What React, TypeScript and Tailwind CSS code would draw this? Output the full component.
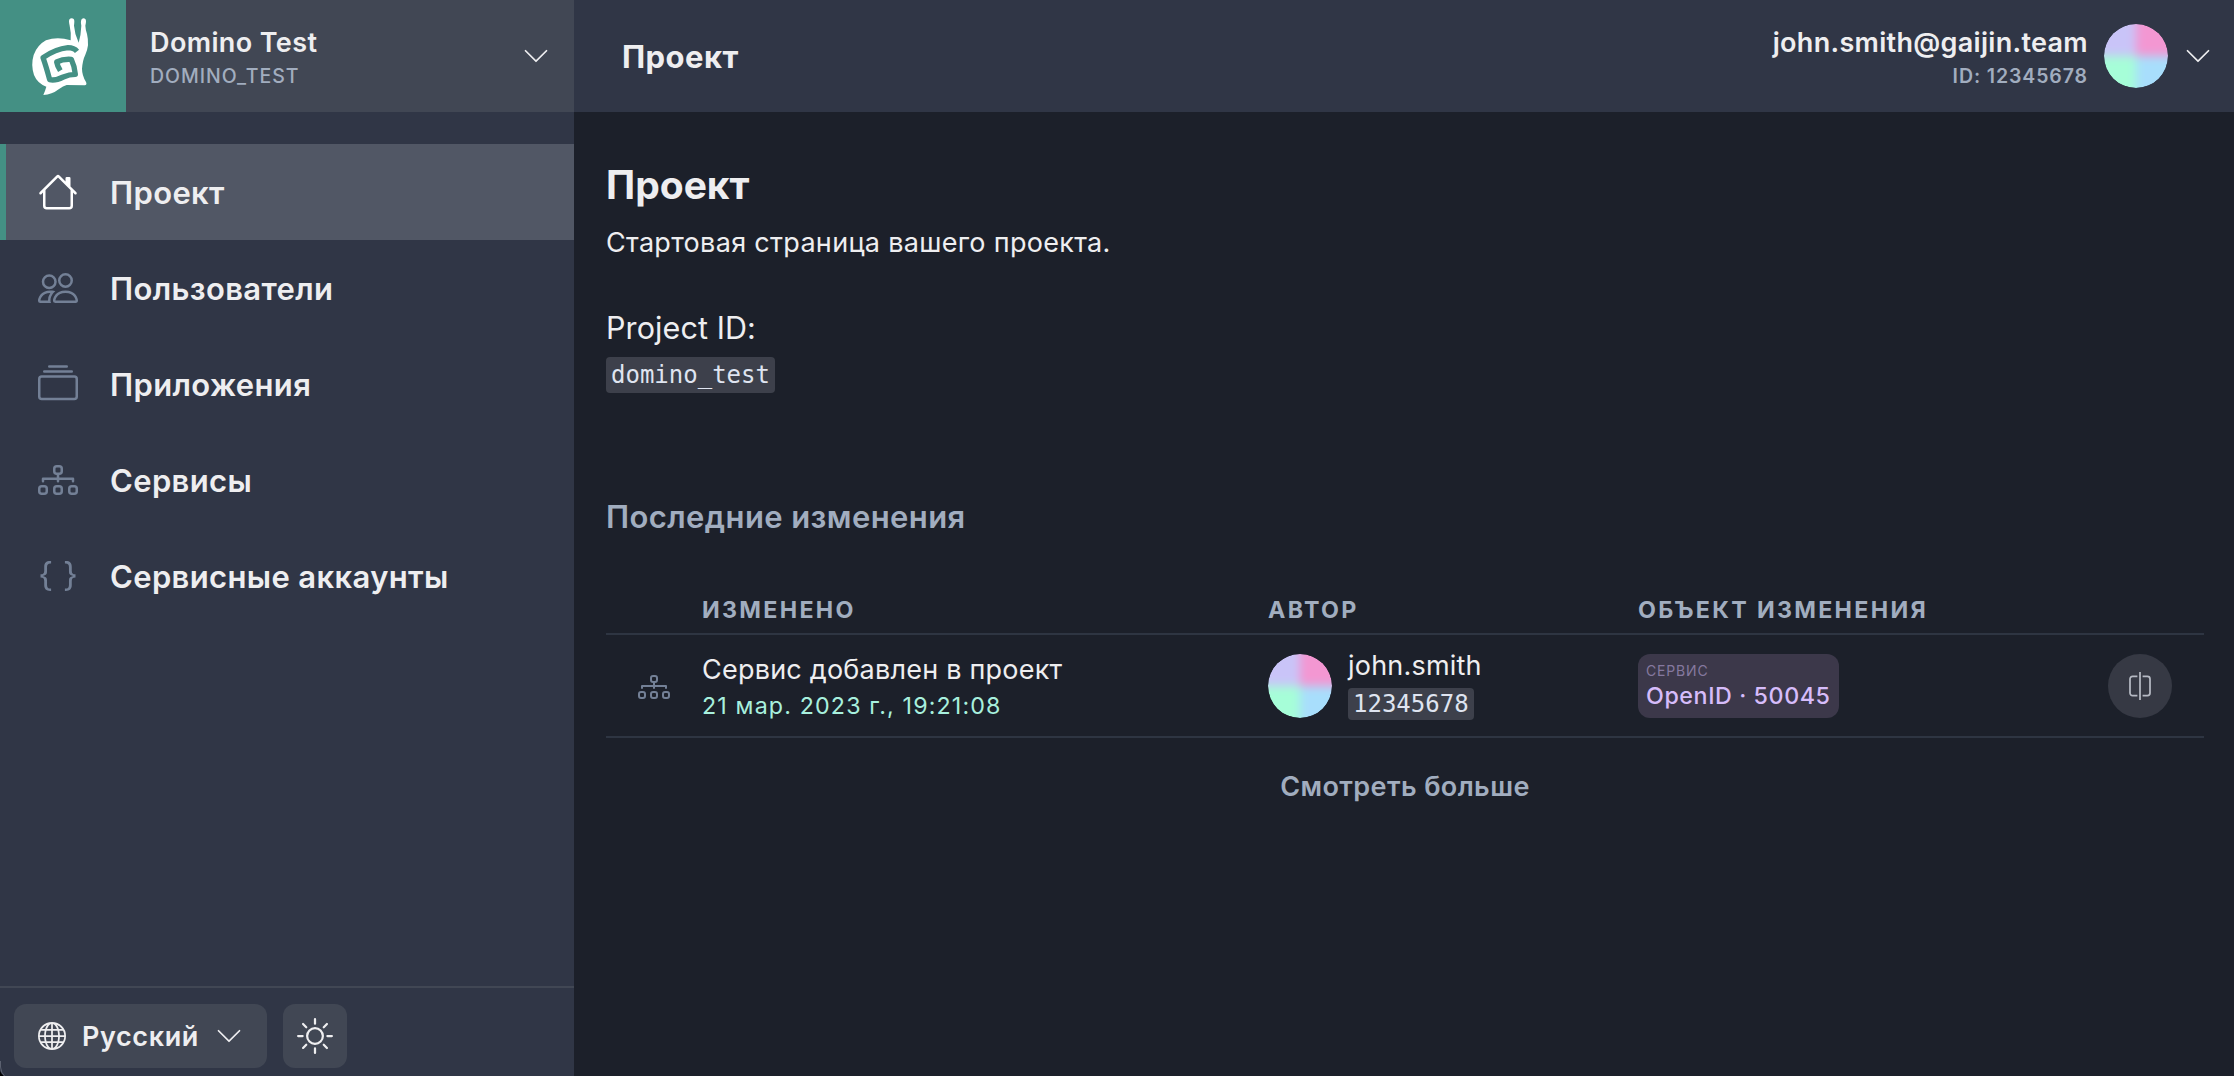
import type { ReactNode } from "react";
import type { IconType } from "react-icons";
import {
  BsBraces,
  BsChevronDown,
  BsCollection,
  BsDiagram3,
  BsGlobe,
  BsHouse,
  BsPeople,
  BsSun,
} from "react-icons/bs";

function SnailLogo() {
  return (
    <svg viewBox="0 0 378 336" className="h-28 w-[126px] shrink-0 bg-[#449084]">
      <path
        fill="#fff"
        d="M207 64Q207 55 215 55Q223 55 223 64Q223 70 222 77Q224 103 236 128Q243 104 244 77Q242 70 243 63Q244 55 250 55Q258 55 258 64Q258 70 256 77Q257 92 261 102Q265 118 264 136Q262 152 256 164Q248 180 246 206Q246 226 258 246Q262 255 254 256L200 255Q190 258 176 268Q156 284 130 285Q135 274 139 260Q112 250 102 225Q92 195 101 165Q112 135 138 121Q172 108 212 121Q214 98 209 77Q207 70 207 64Z"
      />
      <path
        fill="none"
        stroke="#449084"
        strokeWidth="16"
        strokeLinejoin="round"
        d="M231 154Q222 143 204 143Q166 147 129 173Q138 198 149 239Q166 243 190 231Q208 223 226 223Q224 199 214 178Q190 176 170 186Q172 198 181 212"
      />
      <path fill="#fff" d="M187 196L207 191L212 210L190 214Z" />
    </svg>
  );
}

function Avatar() {
  return (
    <div className="size-16 shrink-0 overflow-hidden rounded-full [clip-path:circle(50%)]">
      <div className="-m-4 grid size-24 grid-cols-2 grid-rows-2 blur-[5px]">
        <div className="bg-[#c9c4f8]" />
        <div className="bg-[#f397d2]" />
        <div className="bg-[#a6fed8]" />
        <div className="bg-[#a8defc]" />
      </div>
    </div>
  );
}

function CompareIcon() {
  return (
    <svg viewBox="0 0 28 28" className="size-7" fill="none" stroke="#b5b9c3" strokeWidth="1.75">
      <path d="M14 0V28" />
      <path d="M11.4 4.4H6.6A2.6 2.6 0 0 0 4 7V21A2.6 2.6 0 0 0 6.6 23.6H11.4" />
      <path d="M16.6 4.4H21.4A2.6 2.6 0 0 1 24 7V21A2.6 2.6 0 0 1 21.4 23.6H16.6" />
    </svg>
  );
}

function Code({ className, children }: { className: string; children: ReactNode }) {
  return (
    <code
      className={`flex w-fit items-center rounded bg-[#3d404b] px-[5px] font-['DejaVu_Sans_Mono',monospace] text-2xl text-[#dfe4f0] ${className}`}
    >
      {children}
    </code>
  );
}

const nav: { label: string; icon: IconType; active?: boolean }[] = [
  { label: "Проект", icon: BsHouse, active: true },
  { label: "Пользователи", icon: BsPeople },
  { label: "Приложения", icon: BsCollection },
  { label: "Сервисы", icon: BsDiagram3 },
  { label: "Сервисные аккаунты", icon: BsBraces },
];

function Sidebar() {
  return (
    <aside className="relative flex w-[574px] shrink-0 flex-col bg-[#303646]">
      <div className="flex h-28 items-center bg-[#414754]">
        <SnailLogo />
        <div className="flex-1 pl-6">
          <div className="-mb-0.5 text-[27px] leading-[42px] font-semibold tracking-[0.38px]">
            Domino Test
          </div>
          <div className="text-[19.5px] leading-7 font-medium tracking-[0.98px] text-[#a1adbf]">
            DOMINO_TEST
          </div>
        </div>
        <BsChevronDown className="mr-6 size-7" />
      </div>
      <nav className="mt-8 flex-1">
        {nav.map(({ label, icon: Icon, active }) => (
          <a
            key={label}
            className={`flex h-24 items-center gap-8 border-l-[6px] pl-8 text-[31px] font-semibold tracking-[0.36px] ${
              active ? "border-[#449084] bg-[#515765]" : "border-transparent"
            }`}
          >
            <Icon className={`size-10 ${active ? "text-white" : "text-[#738096]"}`} />
            <span className="pt-0.5">{label}</span>
          </a>
        ))}
      </nav>
      <div className="flex h-[90px] gap-4 border-t-2 border-[#414754] pt-4 pl-3.5">
        <button className="flex h-16 w-[253px] items-center rounded-xl bg-[#414754] px-6">
          <BsGlobe className="size-7" />
          <span className="flex-1 pt-0.5 pl-4 text-left text-[27px] font-semibold tracking-[0.6px]">
            Русский
          </span>
          <BsChevronDown className="size-7" />
        </button>
        <button className="flex size-16 items-center justify-center rounded-xl bg-[#414754]">
          <BsSun className="size-9" />
        </button>
      </div>
      <svg viewBox="0 0 6 18" className="absolute bottom-0 left-0 h-[18px] w-1.5">
        <path d="M0 13Q1 16 4 18H0Z" fill="#000" />
        <path d="M0.5 3V9Q1 15 4.5 18" fill="none" stroke="#5b6170" />
      </svg>
    </aside>
  );
}

function Header() {
  return (
    <header className="flex h-28 shrink-0 items-center bg-[#303646] pr-[22px] pl-12">
      <h1 className="flex-1 pt-0.5 text-[31px] font-bold tracking-[0.45px]">Проект</h1>
      <div className="mr-4 text-right font-semibold">
        <div className="-mb-0.5 text-[27px] leading-[42px] tracking-[0.31px]">
          john.smith@gaijin.team
        </div>
        <div className="text-[19.5px] leading-7 tracking-[0.9px] text-[#a1adbf]">ID: 12345678</div>
      </div>
      <Avatar />
      <BsChevronDown className="ml-4 size-7" />
    </header>
  );
}

function ChangesTable() {
  return (
    <section>
      <div className="mt-12 grid h-[50px] grid-cols-[96px_566px_370px_1fr] items-center border-b-2 border-[#2e3542] pt-0.5 text-[23.25px] font-bold tracking-[2.3px] text-[#a1adbf]">
        <span />
        <span>ИЗМЕНЕНО</span>
        <span>АВТОР</span>
        <span>ОБЪЕКТ ИЗМЕНЕНИЯ</span>
      </div>
      <div className="grid h-[103px] grid-cols-[96px_566px_370px_201px_1fr] items-center border-b-2 border-[#2e3542] pt-px">
        <BsDiagram3 className="mt-0.5 ml-8 size-8 text-[#738096]" />
        <div className="pt-0.5">
          <div className="-mb-0.5 text-[27px] leading-10 tracking-[0.22px]">
            Сервис добавлен в проект
          </div>
          <div className="text-[23.25px] leading-9 tracking-[1.14px] text-[#a8f0de]">
            21 мар. 2023 г., 19:21:08
          </div>
        </div>
        <div className="flex items-center gap-4">
          <Avatar />
          <div className="-mt-1">
            <div className="text-[27px] leading-9 tracking-[0.2px]">john.smith</div>
            <Code className="mt-1 h-8">12345678</Code>
          </div>
        </div>
        <div className="h-16 rounded-xl bg-[#3c384a] pt-2 pl-2 whitespace-nowrap">
          <div className="text-sm leading-[18px] tracking-[0.84px] text-[#85789f]">СЕРВИС</div>
          <div className="text-[23.25px] leading-8 font-medium tracking-[0.58px] text-[#d6bcfa]">
            OpenID · 50045
          </div>
        </div>
        <button className="mr-8 flex size-16 items-center justify-center justify-self-end rounded-full bg-[#363944]">
          <CompareIcon />
        </button>
      </div>
    </section>
  );
}

export default function App() {
  return (
    <div className="flex h-[1076px] w-[2234px] overflow-hidden bg-[#1c202a] font-['Inter',sans-serif] text-[#eeeef0]">
      <Sidebar />
      <div className="flex flex-1 flex-col">
        <Header />
        <main className="flex-1 pt-[49px] pr-[30px] pl-8">
          <h2 className="text-[39px] leading-[48px] font-bold">Проект</h2>
          <p className="mt-4 text-[27px] leading-9 tracking-[0.3px]">
            Стартовая страница вашего проекта.
          </p>
          <div className="mt-[47px] text-[30.5px] leading-10 tracking-[0.1px]">Project ID:</div>
          <Code className="mt-[9px] h-9">domino_test</Code>
          <h3 className="mt-[104px] text-[31px] leading-10 font-semibold tracking-[0.4px] text-[#a1adbf]">
            Последние изменения
          </h3>
          <ChangesTable />
          <button className="mx-auto mt-[29px] block text-[27px] leading-10 font-semibold tracking-[0.39px] text-[#a1adbf]">
            Смотреть больше
          </button>
        </main>
      </div>
    </div>
  );
}
